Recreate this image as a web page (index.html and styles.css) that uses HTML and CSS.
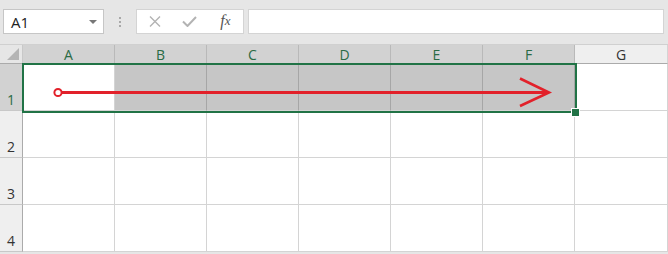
FILE: index.html
```html
<!DOCTYPE html>
<html>
<head>
<meta charset="utf-8">
<link rel="stylesheet" href="styles.css">
</head>
<body>
<div class="toolbar">
  <div class="namebox"><span class="nb-text">A1</span><span class="nb-caret"></span></div>
  <div class="sep"><span></span><span></span><span></span></div>
  <div class="fbtns">
    <div class="fbtn">
      <svg width="12" height="11" viewBox="0 0 12 11"><path d="M1 0.5 L11 10.5 M11 0.5 L1 10.5" stroke="#b3b3b3" stroke-width="1.4" fill="none"/></svg>
    </div>
    <div class="fbtn">
      <svg width="15" height="11" viewBox="0 0 15 11"><path d="M1 5.5 L5.5 10 L14 1" stroke="#b3b3b3" stroke-width="2" fill="none"/></svg>
    </div>
    <div class="fbtn fx">f<span>x</span></div>
  </div>
  <div class="finput"></div>
</div>
<div class="sheet">
  <div class="grid">
    <div class="corner"><span class="tri"></span></div>
    <div class="ch sel">A</div>
    <div class="ch sel">B</div>
    <div class="ch sel">C</div>
    <div class="ch sel">D</div>
    <div class="ch sel">E</div>
    <div class="ch sel">F</div>
    <div class="ch">G</div>

    <div class="rh sel">1</div>
    <div class="c"></div>
    <div class="c hl"></div>
    <div class="c hl"></div>
    <div class="c hl"></div>
    <div class="c hl"></div>
    <div class="c hl"></div>
    <div class="c"></div>

    <div class="rh">2</div>
    <div class="c"></div><div class="c"></div><div class="c"></div><div class="c"></div><div class="c"></div><div class="c"></div><div class="c"></div>

    <div class="rh">3</div>
    <div class="c"></div><div class="c"></div><div class="c"></div><div class="c"></div><div class="c"></div><div class="c"></div><div class="c"></div>

    <div class="rh">4</div>
    <div class="c"></div><div class="c"></div><div class="c"></div><div class="c"></div><div class="c"></div><div class="c"></div><div class="c"></div>
  </div>
  <div class="selection"></div>
  <div class="handle"></div>
  <svg class="arrow" width="668" height="210" viewBox="0 44 668 210">
    <line x1="62" y1="92.5" x2="548" y2="92.5" stroke="#e2212a" stroke-width="3"/>
    <circle cx="58" cy="92.5" r="3.6" stroke="#e2212a" stroke-width="2" fill="#fff"/>
    <polyline points="520,78.5 549,92.5 520,106" stroke="#e2212a" stroke-width="2.6" fill="none"/>
  </svg>
</div>
</body>
</html>
```
FILE: styles.css
```css
html, body {
  margin: 0;
  padding: 0;
  background: #e6e6e6;
  overflow: hidden;
}
body {
  width: 668px;
  height: 254px;
  font-family: "Open Sans", "Noto Sans", sans-serif;
}
.toolbar {
  display: flex;
  align-items: flex-start;
  height: 44px;
  box-sizing: border-box;
  padding-top: 9px;
}
.namebox {
  margin-left: 3px;
  width: 101px;
  height: 25px;
  box-sizing: border-box;
  background: #fff;
  border: 1px solid #c6c6c6;
  display: flex;
  align-items: center;
  justify-content: space-between;
  padding: 0 6px 0 7px;
}
.nb-text {
  font-size: 15px;
  color: #222;
}
.nb-caret {
  width: 0;
  height: 0;
  border-left: 4px solid transparent;
  border-right: 4px solid transparent;
  border-top: 4px solid #777;
}
.sep {
  width: 32px;
  height: 25px;
  display: flex;
  flex-direction: column;
  align-items: center;
  justify-content: center;
  gap: 2px;
}
.sep span {
  width: 2px;
  height: 2px;
  background: #a8a8a8;
}
.fbtns {
  width: 108px;
  height: 25px;
  box-sizing: border-box;
  background: #fff;
  border: 1px solid #d4d4d4;
  display: flex;
}
.fbtn {
  width: 36px;
  display: flex;
  align-items: center;
  justify-content: center;
}
.fx {
  font-family: "Liberation Serif", serif;
  font-style: italic;
  font-size: 16px;
  color: #555;
  padding-bottom: 2px;
}
.fx span {
  font-size: 13px;
}
.finput {
  margin-left: 4px;
  width: 416px;
  height: 25px;
  box-sizing: border-box;
  background: #fff;
  border: 1px solid #d4d4d4;
}
.sheet {
  position: relative;
  height: 210px;
  border-top: 1px solid #d0d0d0;
  box-sizing: border-box;
}
.grid {
  display: grid;
  grid-template-columns: 23px repeat(6, 92px) 93px;
  grid-template-rows: 19px repeat(4, 47px);
  background: #fff;
}
.corner {
  background: #e6e6e6;
  border-right: 1px solid #c8c8c8;
  border-bottom: 1px solid #ababab;
  box-sizing: border-box;
  position: relative;
}
.tri {
  position: absolute;
  right: 3px;
  bottom: 3px;
  width: 0;
  height: 0;
  border-left: 12px solid transparent;
  border-bottom: 12px solid #b4b4b4;
}
.ch {
  background: #efefef;
  border-right: 1px solid #d4d4d4;
  border-bottom: 1px solid #ababab;
  box-sizing: border-box;
  display: flex;
  align-items: center;
  justify-content: center;
  font-size: 14px;
  color: #333;
  padding-top: 1px;
}
.ch.sel {
  background: #d2d2d2;
  color: #2a6b45;
  border-right-color: #b9b9b9;
}
.rh {
  background: #efefef;
  border-right: 1px solid #ababab;
  border-bottom: 1px solid #c8c8c8;
  box-sizing: border-box;
  display: flex;
  align-items: flex-end;
  justify-content: center;
  font-size: 14px;
  color: #333;
  padding-bottom: 1px;
}
.rh.sel {
  background: #d2d2d2;
  color: #2a6b45;
}
.c {
  border-right: 1px solid #d4d4d4;
  border-bottom: 1px solid #d4d4d4;
  box-sizing: border-box;
  background: #fff;
}
.c.hl {
  background: #c6c6c6;
  border-right-color: #a6a6a6;
}
.selection {
  position: absolute;
  left: 22px;
  top: 18px;
  width: 555px;
  height: 50px;
  box-sizing: border-box;
  border: 2px solid #217346;
}
.handle {
  position: absolute;
  left: 572px;
  top: 64px;
  width: 7px;
  height: 7px;
  box-sizing: border-box;
  background: #217346;
  outline: 1px solid #fff;
}
.arrow {
  position: absolute;
  left: 0;
  top: -1px;
}
```
